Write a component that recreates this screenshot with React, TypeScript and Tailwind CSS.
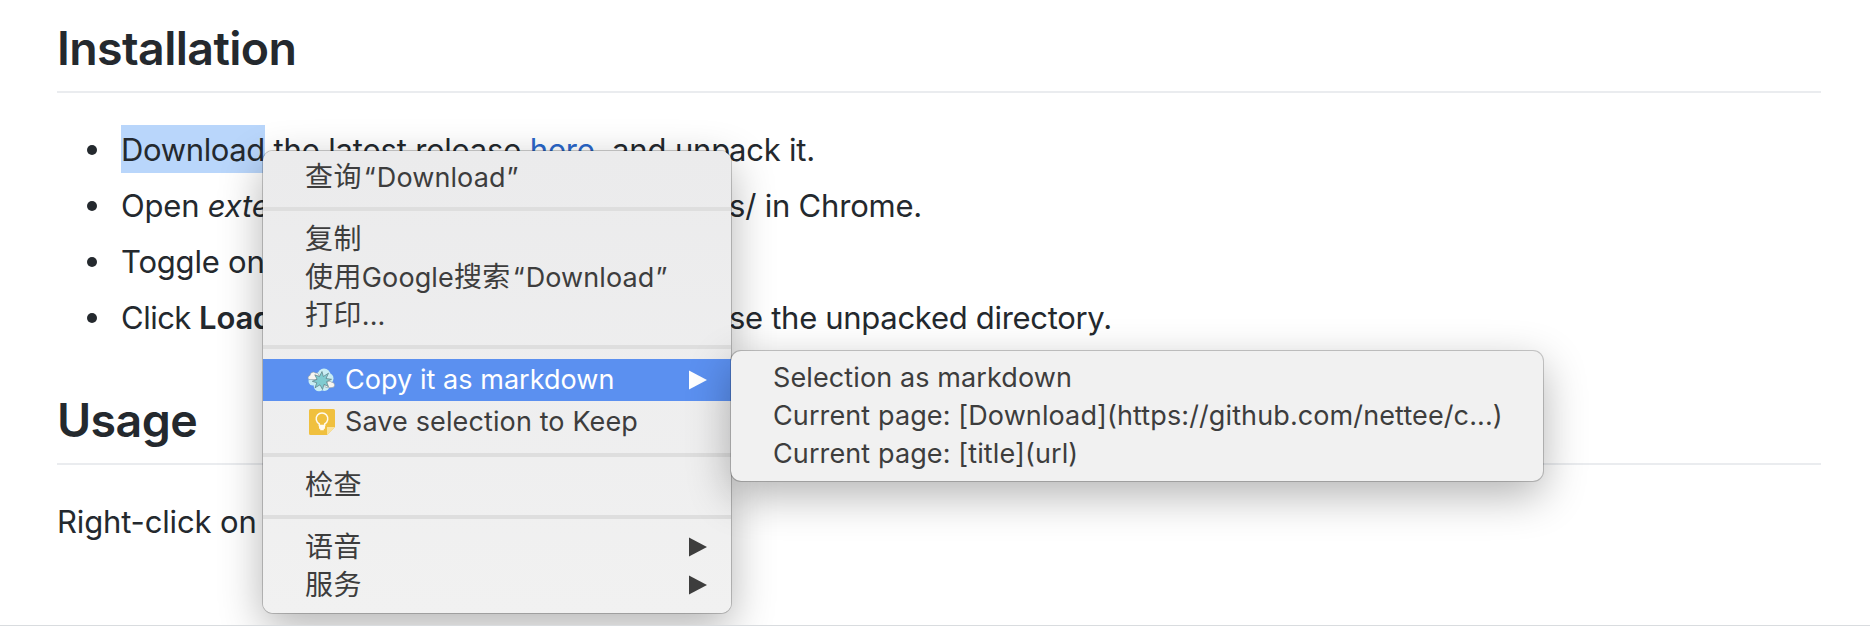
import type { ReactNode } from 'react';

function Heading({ children }: { children: ReactNode }) {
  return (
    <h2 className="h-[75px] border-b-2 border-[#eaecef] text-[46.5px] leading-[60px] font-semibold tracking-[-0.6px]">
      {children}
    </h2>
  );
}

function Bullet({ start, end }: { start: ReactNode; end?: ReactNode }) {
  return (
    <li className="flex h-12 items-start leading-[50px] whitespace-pre">
      <span className="mt-5 ml-[30px] size-[10px] shrink-0 rounded-full bg-[#24292e]" />
      <span className="ml-6 w-[608px] shrink-0">{start}</span>
      <span>{end}</span>
    </li>
  );
}

function Cjk({ children }: { children: ReactNode }) {
  return <span className="text-[28px] tracking-[0.4px]">{children}</span>;
}

function Quoted({ children }: { children: ReactNode }) {
  return (
    <span className="ml-[2px] tracking-[0.1px]">
      “<span className="ml-px">{children}</span><span className="ml-px">”</span>
    </span>
  );
}

function Arrow() {
  return (
    <svg className="mr-[24px] ml-auto h-5 w-[18px]" viewBox="0 0 18 20" fill="currentColor">
      <path d="M0 .4 18 10 0 19.6z" />
    </svg>
  );
}

function Item({ children, arrow }: { children: ReactNode; arrow?: boolean }) {
  return (
    <div className="flex h-[38px] items-center pl-[42px] leading-[38px] whitespace-pre">
      <span className="relative top-[0.5px]">{children}</span>
      {arrow && <Arrow />}
    </div>
  );
}

function Separator() {
  return <div className="mt-[11px] mb-[9px] h-1 bg-[#dedede]" />;
}

function CloudIcon() {
  return (
    <svg className="h-6 w-7" viewBox="0 0 28 24">
      <g fill="#c8edf3">
        <circle cx="17" cy="7" r="6.500" />
        <circle cx="21" cy="10.500" r="5.500" />
        <circle cx="12" cy="18" r="5.300" />
        <circle cx="17.500" cy="18" r="5" />
        <circle cx="6" cy="13" r="4.500" />
        <circle cx="14" cy="12" r="8" />
      </g>
      <path d="M2 11.500a2.200 2.200 0 0 1 1-4 3.300 3.300 0 0 1 5.500-2.500 3 3 0 0 1 3.500 3.500q-1 3-3 3z" fill="#f7f5f1" stroke="#8b9ba3" strokeWidth=".6" />
      <path d="M19 19.500a2.300 2.300 0 0 1 .5-4.300 3 3 0 0 1 5-1 2.800 2.800 0 0 1 2 5q-1 .8-7.500.3z" fill="#f7f5f1" stroke="#8b9ba3" strokeWidth=".6" />
      <path d="m15 3.500 1.300 5 5.200-3.300-2.500 5.300 5.500.8-5 2.400 2 5-4.500-2.400-1.500 5.200-2.500-4.700-5 3 1.800-5-4.500-1.500 4.800-2-2.300-4.500 4.700 1.700z" fill="#7fcbd0" stroke="#5b7d84" strokeWidth=".7" />
    </svg>
  );
}

function KeepIcon() {
  return (
    <svg className="size-[26px]" viewBox="0 0 26 26">
      <path d="M1.500 0h23A1.500 1.500 0 0 1 26 1.500V18l-8 8H1.500A1.500 1.500 0 0 1 0 24.500v-23A1.500 1.500 0 0 1 1.500 0z" fill="#f0c03e" />
      <path d="M18 26v-8h8z" fill="#fae29a" />
      <path d="M10.300 16.500v-1.600a5.800 5.800 0 1 1 5.400 0v1.600z" fill="none" stroke="#fffaf0" strokeWidth="1.500" />
      <path d="M10 17h6v2.700h-1.200v1.600h-3.600v-1.600H10z" fill="#fffaf0" />
    </svg>
  );
}

export default function App() {
  return (
    <div className="relative h-[626px] w-[1870px] overflow-hidden border-b border-[#d9dcdf] bg-white font-['Inter','Noto_Sans_CJK_SC',sans-serif] text-[31px] leading-[48px] text-[#24292e]">
      <div className="pt-[18px] pr-[49px] pl-[57px]">
        <Heading>Installation</Heading>
        <ul className="mt-8 flex flex-col gap-2 tracking-[-0.2px]">
          <Bullet
            start={
              <>
                <span className="inline-block h-12 w-[144px] bg-[#b9d6fb] align-top tracking-[-0.36px]">Download</span>
                <span className="tracking-[-0.15px]"> the latest release <a className="text-[#2a66c8]">here</a>, and unp</span>
              </>
            }
            end="ack it."
          />
          <Bullet start={<>Open <em>exte</em></>} end="s/ in Chrome." />
          <Bullet start="Toggle on" />
          <Bullet
            start={<><span className="tracking-[-0.5px]">Click </span><b className="font-semibold">Load</b></>}
            end={<span className="tracking-[-0.3px]">se the unpacked directory.</span>}
          />
        </ul>
        <div className="mt-[49px]">
          <Heading>Usage</Heading>
        </div>
        <p className="mt-8 leading-[50px] tracking-[-0.15px]">Right-click on</p>
      </div>

      <div className="absolute top-[151px] left-[263px] h-[462px] w-[468px] rounded-[10px] bg-linear-to-b from-[#ebebec] to-[#f1f1f1] pt-[7px] text-[27px] tracking-[0.12px] text-[#3d3d3d] shadow-[0_0_0_1px_rgba(0,0,0,0.2),0_14px_44px_rgba(0,0,0,0.3)]">
        <Item><Cjk>查询</Cjk><Quoted>Download</Quoted></Item>
        <Separator />
        <Item><Cjk>复制</Cjk></Item>
        <Item><Cjk>使用</Cjk>Google<Cjk>搜索</Cjk><Quoted>Download</Quoted></Item>
        <Item><Cjk>打印</Cjk>...</Item>
        <div className="mt-[11px] mb-[10px] h-1 bg-[#dedede]" />
        <div className="flex h-[42px] items-center bg-[#5b90f0] pl-[44px] leading-[40px] text-white">
          <CloudIcon />
          <span className="ml-[10px] pb-px tracking-[0.05px]">Copy it as markdown</span>
          <Arrow />
        </div>
        <div className="flex h-[42px] items-center pl-[46px]">
          <KeepIcon />
          <span className="ml-[10px] pb-px leading-[40px]">Save selection to Keep</span>
        </div>
        <div className="mt-[10px] mb-[9px] h-1 bg-[#dedede]" />
        <Item><Cjk>检查</Cjk></Item>
        <Separator />
        <Item arrow><Cjk>语音</Cjk></Item>
        <Item arrow><Cjk>服务</Cjk></Item>
      </div>

      <div className="absolute top-[351px] left-[731px] h-[130px] w-[812px] rounded-[10px] bg-[#f1f1f1] pt-[7px] text-[27px] tracking-[0.11px] text-[#3d3d3d] shadow-[0_0_0_1px_rgba(0,0,0,0.2),0_14px_44px_rgba(0,0,0,0.3)]">
        <Item>Selection as markdown</Item>
        <Item>Current page: [Download](https://github.com/nettee/c...)</Item>
        <Item>Current page: [title](url)</Item>
      </div>
    </div>
  );
}
